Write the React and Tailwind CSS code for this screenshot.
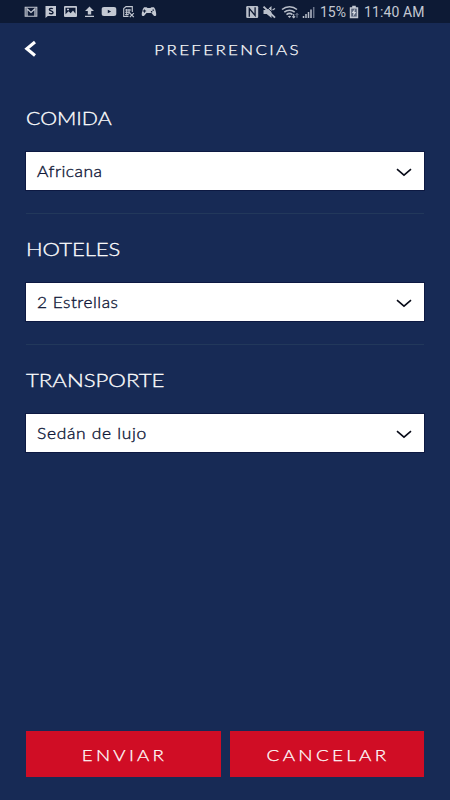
import React from "react";

const preferences = [
  { title: "COMIDA", value: "Africana", titleClass: "scale-x-[1.150]", valueClass: "scale-x-[1.160] tracking-[0.400px]" },
  { title: "HOTELES", value: "2 Estrellas", titleClass: "scale-x-[1.190]", valueClass: "scale-x-[1.150] tracking-[0.450px]" },
  { title: "TRANSPORTE", value: "Sedán de lujo", titleClass: "scale-x-[1.200]", valueClass: "scale-x-[1.160] tracking-[0.600px]" },
];

function NotificationIcons() {
  return (
    <svg width="134" height="14" viewBox="0 0 134 14" fill="none" className="text-[#c3c8d2]">
      <path d="M1.200 2.200h11.600v9H1.200z" stroke="currentColor" strokeWidth="1.100" />
      <path d="M3 11V3.800L7 7.400l4-3.600V11" stroke="currentColor" strokeWidth="1.300" />
      <path d="M21.500 1H32v10h-8.200L21.500 13z" fill="currentColor" />
      <path d="M28.800 3.900c-.7-.8-3.400-.9-3.400.7 0 1.700 3.600.9 3.600 2.800 0 1.700-2.800 1.600-3.800.6" stroke="#0d1932" strokeWidth="1.400" />
      <path fillRule="evenodd" fill="currentColor" d="M41 1h11a1 1 0 0 1 1 1v9a1 1 0 0 1-1 1H41a1 1 0 0 1-1-1V2a1 1 0 0 1 1-1zm.5 1.700v6.500l3-3 2.200 2.100 2.300-2.800 2.500 3.200v-6zM43 3.800h2v1.500h-2z" />
      <path d="M65.500 1.400L70 6h-2.800v3.500h-3.400V6H61zM61 10.700h9V12h-9z" fill="currentColor" />
      <path fillRule="evenodd" fill="currentColor" d="M80 2h10c1.500 0 2.300.7 2.300 2.200v4.600c0 1.500-.8 2.200-2.300 2.200H80c-1.500 0-2.300-.7-2.300-2.200V4.200C77.700 2.700 78.500 2 80 2zm3.800 2.700v3.600l3.300-1.800z" />
      <path d="M104.500 11.500H99.700V3.600l2.300-2h6.300V7M101.200 5h6M101.200 7.300h5M101.200 9.600h3.500M102.700 4v6.500M105 4v5" stroke="currentColor" strokeWidth="1.100" />
      <path d="M105.800 8.200l4 4M109.800 8.200l-4 4" stroke="currentColor" strokeWidth="1.200" />
      <path fillRule="evenodd" fill="currentColor" d="M120.200 2.200h2.300l1.100.8h2.800l1.100-.8h2.300c1.300.6 2.600 5.400 2.400 7.700-.1 1.200-1.800 1.500-2.600.5l-2.100-2.300h-5l-2.100 2.300c-.8 1-2.500.7-2.600-.5-.2-2.300 1.100-7.100 2.400-7.700zm-.3 2.200v1.200h-1.200v1h1.200v1.200h1V6.600h1.200v-1h-1.200V4.400zm8.600 0v1.400h1.400V4.400zm-1.600 1.700v1.400h1.400V6.100z" />
    </svg>
  );
}

function ConnectionIcons() {
  return (
    <svg width="72" height="16" viewBox="0 0 72 16" fill="none" className="text-[#b9bfca]">
      <rect x="1.200" y="2" width="12" height="12" rx="1.200" fill="currentColor" />
      <path d="M4.300 12.800V4.500l5.800 7V3.200" stroke="#0d1932" strokeWidth="1.300" />
      <path d="M18.500 6h3.200l4.800-4v12l-4.800-4h-3.200z" fill="currentColor" />
      <path d="M20.500 1.800l11 10.500" stroke="#0d1932" strokeWidth="0.900" />
      <path d="M18.500 2.600l11.500 11" stroke="currentColor" strokeWidth="1.900" />
      <path d="M27.500 6l2.500-1.500" stroke="currentColor" strokeWidth="1.300" />
      <path d="M37 5.500c4.300-3.700 10.700-3.700 15 0M39.300 8.100c3-2.500 7.400-2.500 10.400 0M41.500 10.600c1.800-1.500 4.200-1.500 6 0" stroke="currentColor" strokeWidth="1.500" />
      <path d="M42.800 12.300q1.700-1 3.400 0L44.500 14z" fill="currentColor" />
      <path d="M48.700 10v3.500M47.300 12.300l1.400 1.500 1.400-1.500" stroke="currentColor" strokeWidth="1.100" />
      <path d="M52 13.800V9.500M50.700 10.800L52 9.400l1.300 1.400" stroke="#7c869a" strokeWidth="1" />
      <path d="M58.500 12V14M61 10V14M63.500 8v6M66 5.500V14" stroke="currentColor" strokeWidth="1.500" />
      <path d="M68.700 3V14" stroke="#6b768b" strokeWidth="1.500" />
    </svg>
  );
}

function BatteryIcon() {
  return (
    <svg width="10" height="14" viewBox="0 0 10 14">
      <path d="M3.200.8h3.600v1.400h2.400v11H.8v-11h2.400z" fill="#c3c8d2" />
      <path d="M2.200 3.600h5.600v8H2.200z" fill="#58637a" />
      <path d="M5.900 3.800L2.800 8h1.700L4 11.400l3.200-4.300H5.500z" fill="#d5d9e1" />
    </svg>
  );
}

function StatusBar() {
  return (
    <div className="flex h-[23px] items-center bg-[#0d1a35] pl-6 pr-[25px] text-[#c3c8d2]">
      <NotificationIcons />
      <div className="ml-auto flex items-center font-['Roboto',sans-serif] text-[14px] leading-none">
        <ConnectionIcons />
        <span className="ml-[3px] w-[26px] whitespace-nowrap pt-px">15%</span>
        <span className="ml-[3px]"><BatteryIcon /></span>
        <span className="ml-[5px] w-[61px] whitespace-nowrap pt-px tracking-[0.1px]">11:40 AM</span>
      </div>
    </div>
  );
}

function Preference({ title, value, titleClass, valueClass }) {
  return (
    <section className="h-[131px]">
      <h2 className="h-[44px] whitespace-nowrap text-[18.500px] font-light leading-[20px] text-white [-webkit-text-stroke:0.3px_currentColor]">
        <span className={`inline-block origin-left ${titleClass}`}>{title}</span>
      </h2>
      <button className="flex h-[38px] w-full items-center justify-between bg-white pl-[11px] pr-3 text-[15px] font-light text-[#101838] shadow-[0_0_0_1px_#0d1942] [-webkit-text-stroke:0.35px_currentColor]">
        <span className={`inline-block origin-left whitespace-nowrap ${valueClass}`}>{value}</span>
        <svg width="16" height="9" viewBox="0 0 16 9" fill="none" className="mt-[2px]">
          <path d="M1 1.200l7 6 7-6" stroke="#080b18" strokeWidth="1.600" />
        </svg>
      </button>
      {title !== "TRANSPORTE" && <div className="mt-[23px] h-px bg-[#22385b]" />}
    </section>
  );
}

export default function App() {
  return (
    <div className="flex h-[800px] w-[450px] flex-col overflow-hidden bg-[#172a55] font-['Lato',sans-serif]">
      <StatusBar />
      <header className="grid h-[52px] grid-cols-[50px_1fr_45px] items-center text-white">
        <button aria-label="Volver" className="pl-6">
          <svg width="13" height="18" viewBox="0 0 13 18" fill="none">
            <path d="M11 2L2.800 8.800l8.200 6.700" stroke="white" strokeWidth="3.100" />
          </svg>
        </button>
        <h1 className="whitespace-nowrap pt-[2px] text-center text-[14.500px] font-light tracking-[2px] text-white [-webkit-text-stroke:0.25px_currentColor]">
          <span className="inline-block scale-x-[1.170]">PREFERENCIAS</span>
        </h1>
      </header>
      <main className="flex-1 px-[26px] pt-[33px]">
        {preferences.map((item) => <Preference key={item.title} {...item} />)}
      </main>
      <footer className="mb-[23px] grid h-[46px] grid-cols-2 gap-[9px] px-[26px] text-[16px] font-light tracking-[2.800px] text-white [-webkit-text-stroke:0.25px_currentColor]">
        <button className="bg-[#d00d25] pl-[3px] pt-[2px]"><span className="inline-block scale-x-[1.170]">ENVIAR</span></button>
        <button className="bg-[#d00d25] pl-[2px] pt-[2px]"><span className="inline-block scale-x-[1.180]">CANCELAR</span></button>
      </footer>
    </div>
  );
}
